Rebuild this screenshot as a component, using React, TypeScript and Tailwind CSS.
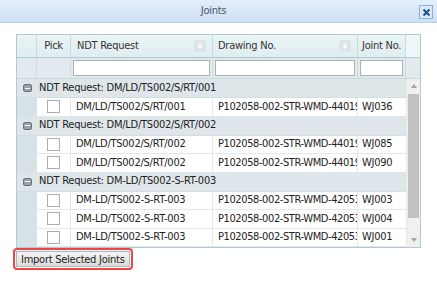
const groups = [
  {
    title: "NDT Request: DM/LD/TS002/S/RT/001",
    rows: [["DM/LD/TS002/S/RT/001", "P102058-002-STR-WMD-44019", "WJ036"]],
  },
  {
    title: "NDT Request: DM/LD/TS002/S/RT/002",
    rows: [
      ["DM/LD/TS002/S/RT/002", "P102058-002-STR-WMD-44019", "WJ085"],
      ["DM/LD/TS002/S/RT/002", "P102058-002-STR-WMD-44019", "WJ090"],
    ],
  },
  {
    title: "NDT Request: DM-LD/TS002-S-RT-003",
    rows: [
      ["DM-LD/TS002-S-RT-003", "P102058-002-STR-WMD-42053", "WJ003"],
      ["DM-LD/TS002-S-RT-003", "P102058-002-STR-WMD-42053", "WJ004"],
      ["DM-LD/TS002-S-RT-003", "P102058-002-STR-WMD-42053", "WJ001"],
    ],
  },
];

function SortIcon() {
  return (
    <span className="flex h-[12px] w-[12px] items-center justify-center rounded-[2px] bg-[#dde3e6]">
      <svg width="8" height="8" viewBox="0 0 8 8">
        <path d="M4 1v4M2 3.5L4 6l2-2.5" stroke="#fff" strokeWidth="1.4" fill="none" />
      </svg>
    </span>
  );
}

export default function App() {
  return (
    <div className="relative h-[281px] w-[437px] overflow-hidden bg-white text-[11px] tracking-[-0.25px] text-[#222] [font-family:'DejaVu_Sans_Condensed','DejaVu_Sans',sans-serif] [font-stretch:condensed]">
      <div className="relative flex h-[23px] items-center justify-center border-b border-[#b7cde8] bg-gradient-to-b from-[#e4eefb] to-[#cfe0f5] pr-[10px]">
        <span className="text-[11px] text-[#4a5566]">Joints</span>
        <span className="absolute right-[4px] top-[5px] flex h-[14px] w-[14px] items-center justify-center border border-[#8fb0d9] bg-[#dbe8f8]">
          <svg width="9" height="9" viewBox="0 0 9 9">
            <path d="M1.5 1.5l6 6M7.5 1.5l-6 6" stroke="#1f4e8c" strokeWidth="2" />
          </svg>
        </span>
      </div>

      <div className="ml-[16px] mt-[11px] w-[405px] border border-[#a9cdd3]">
        <div className="flex h-[23px] whitespace-nowrap border-b border-[#a9cdd3] bg-gradient-to-b from-[#eaf4f5] to-[#e0edef] text-[#333]">
          <div className="w-[20px] border-r border-[#c4dde0]" />
          <div className="flex w-[34px] items-center justify-center border-r border-[#c4dde0]">Pick</div>
          <div className="flex w-[142px] items-center justify-between border-r border-[#c4dde0] pl-[6px] pr-[6px]">
            <span>NDT Request</span>
            <SortIcon />
          </div>
          <div className="flex w-[145px] items-center justify-between border-r border-[#c4dde0] pl-[5px] pr-[6px]">
            <span>Drawing No.</span>
            <SortIcon />
          </div>
          <div className="flex w-[48px] items-center border-r border-[#c4dde0] pl-[4px]">Joint No.</div>
          <div className="flex-1 bg-[#eef6f7]" />
        </div>
        <div className="flex h-[21px] border-b border-[#c9dadd] bg-[#e3eaee]">
          <div className="w-[20px] border-r border-[#d0dde0]" />
          <div className="w-[34px] border-r border-[#d0dde0]" />
          <div className="flex w-[142px] items-center border-r border-[#d0dde0] px-[2px]">
            <div className="h-[16px] w-full border border-[#aab4b8] bg-white" />
          </div>
          <div className="flex w-[145px] items-center border-r border-[#d0dde0] px-[2px]">
            <div className="h-[16px] w-full border border-[#aab4b8] bg-white" />
          </div>
          <div className="flex w-[48px] items-center border-r border-[#d0dde0] px-[2px]">
            <div className="h-[16px] w-full border border-[#aab4b8] bg-white" />
          </div>
          <div className="flex-1" />
        </div>

        <div className="flex">
          <div className="w-[389px]">
            {groups.map((g) => (
              <div key={g.title}>
                <div className="flex h-[19px] items-center border-b border-[#d3dde2] bg-[#dfe6ea]">
                  <div className="flex w-[20px] items-center justify-center">
                    <span className="flex h-[8px] w-[9px] items-center justify-center rounded-[2px] border border-[#6b7278] bg-[#9aa2a8]">
                      <span className="h-[1px] w-[5px] bg-white" />
                    </span>
                  </div>
                  <span className="whitespace-nowrap pl-[2px]">{g.title}</span>
                </div>
                {g.rows.map((r, i) => (
                  <div key={i} className="flex h-[18.5px]">
                    <div className="w-[20px] bg-[#d8e1e6]" />
                    <div className="flex w-[34px] items-center justify-center border-b border-r border-[#e1e8eb]">
                      <span className="h-[13px] w-[13px] border border-[#a7adb1] bg-white" />
                    </div>
                    <div className="flex w-[142px] items-center overflow-hidden whitespace-nowrap border-b border-r border-[#e1e8eb] pl-[5px]">
                      {r[0]}
                    </div>
                    <div className="flex w-[145px] items-center overflow-hidden whitespace-nowrap border-b border-r border-[#e1e8eb] pl-[5px] tracking-[-0.4px]">
                      {r[1]}
                    </div>
                    <div className="flex w-[48px] items-center overflow-hidden whitespace-nowrap border-b border-[#e1e8eb] pl-[4px]">
                      {r[2]}
                    </div>
                  </div>
                ))}
              </div>
            ))}
          </div>
          <div className="flex w-[14px] flex-col items-center border-l border-[#e6e6e6] bg-[#f0f0f0]">
            <div className="flex h-[14px] items-center justify-center">
              <svg width="6" height="4" viewBox="0 0 6 4"><path d="M0 4L3 0l3 4z" fill="#a3a3a3" /></svg>
            </div>
            <div className="mt-[1px] h-[124px] w-[11px] bg-[#c1c1c1]" />
            <div className="flex-1" />
            <div className="flex h-[14px] items-center justify-center">
              <svg width="6" height="4" viewBox="0 0 6 4"><path d="M0 0l3 4 3-4z" fill="#a3a3a3" /></svg>
            </div>
          </div>
        </div>
      </div>

      <div className="ml-[13px] mt-0 inline-flex rounded-[4px] border-2 border-[#ee4444] p-[1px]">
        <button className="h-[16px] border border-[#b5b5b5] bg-gradient-to-b from-[#f4f4f4] to-[#dcdcdc] px-[4px] leading-none text-[#222]">
          Import Selected Joints
        </button>
      </div>
    </div>
  );
}
